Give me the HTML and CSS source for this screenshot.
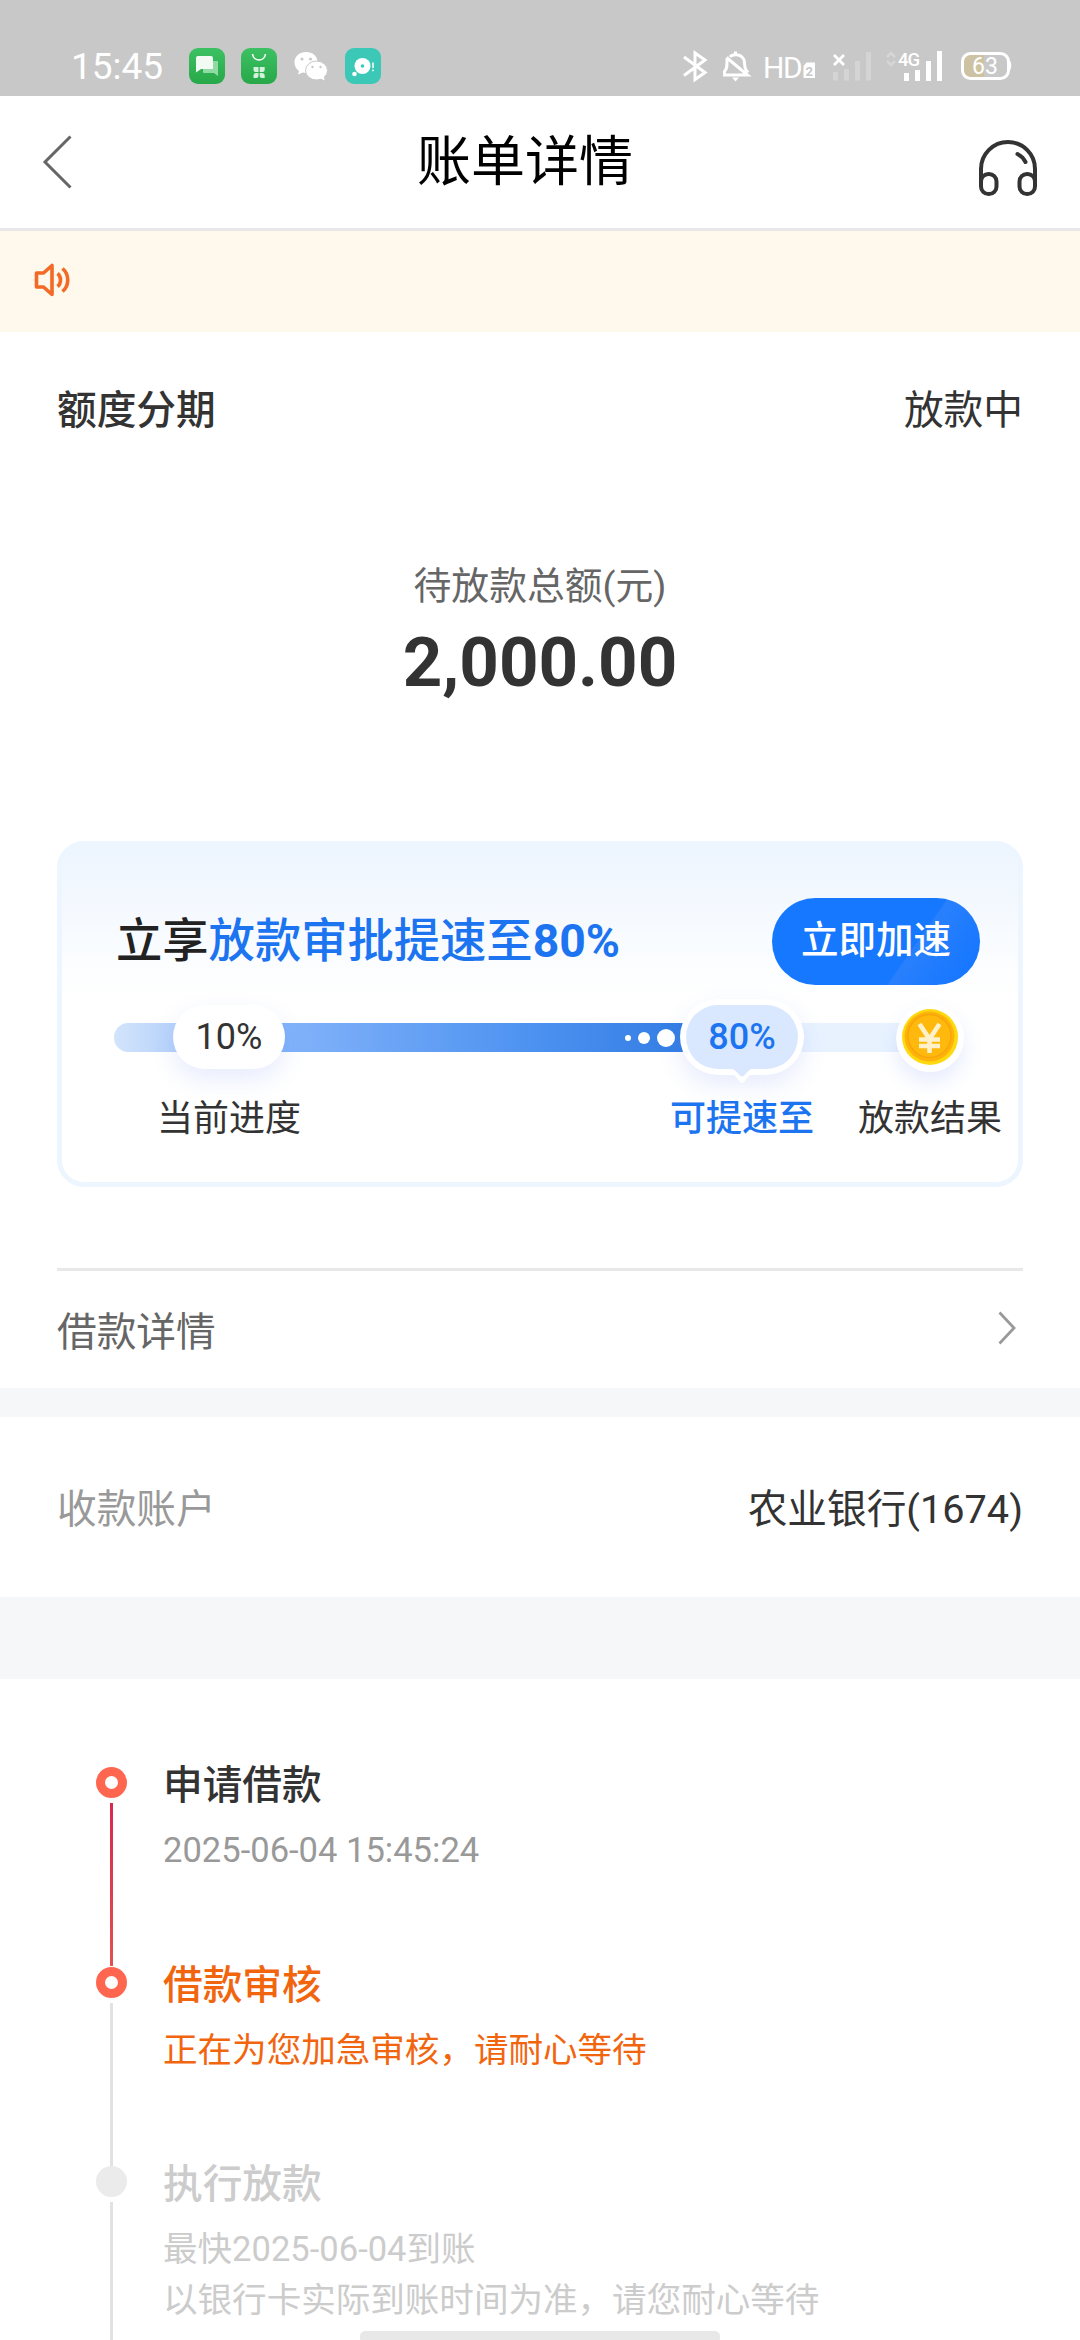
FILE: index.html
```html
<!DOCTYPE html>
<html lang="zh-CN">
<head>
<meta charset="utf-8">
<title>账单详情</title>
<link rel="stylesheet" href="styles.css">
</head>
<body>
<div class="screen">
  <div class="status">
    <span class="clock">15:45</span>
    <svg class="status-apps" width="210" height="36" viewBox="0 0 210 36">
      <defs>
        <linearGradient id="green" x1="0" y1="0" x2="0" y2="1"><stop offset="0" stop-color="#3cc162"/><stop offset="1" stop-color="#27a849"/></linearGradient>
      </defs>
      <g transform="translate(9 0)">
        <rect width="36" height="36" rx="9" fill="url(#green)"/>
        <path d="M14 13h14a1 1 0 0 1 1 1v14l-4-3H15a1 1 0 0 1-1-1z" fill="#8fdba3"/>
        <path d="M9 8h13a2 2 0 0 1 2 2v11H12l-5 3.500V10a2 2 0 0 1 2-2z" fill="#f1fbf3"/>
      </g>
      <g transform="translate(61 0)">
        <rect width="36" height="36" rx="9" fill="url(#green)"/>
        <path d="M11.500 6c1 8 12 8 13 0" fill="none" stroke="#fff" stroke-width="1.600"/>
        <path d="M12.500 19h5v5h-3a2 2 0 0 1-2-2zM18.700 19h5v3a2 2 0 0 1-2 2h-3zM12.500 30v-2a3 3 0 0 1 3-3h2v3a2 2 0 0 1-2 2zM18.700 25h2a3 3 0 0 1 3 3v2h-3a2 2 0 0 1-2-2z" fill="#d3f2db"/>
      </g>
      <g transform="translate(10 0)">
        <path d="M116 4c6.500 0 11.500 4 11.500 10S122 25 116 25l-3-.4-5 2 1-3.500c-3-2-4.500-5-4.500-9C104.500 8 110 4 116 4z" fill="#fff"/>
        <ellipse cx="126.500" cy="22.500" rx="11" ry="9.500" fill="#fff" stroke="#c8c8c8"/>
        <path d="M130 30l4.500 2.500-1-5.500z" fill="#fff"/>
        <g fill="#c8c8c8"><circle cx="112" cy="11" r="1.500"/><circle cx="120.500" cy="11" r="1.500"/><circle cx="122.500" cy="19" r="1.200"/><circle cx="130.500" cy="19" r="1.200"/></g>
      </g>
      <g transform="translate(165 0)">
        <rect width="36" height="36" rx="9" fill="#3cc8b6"/>
        <circle cx="17.500" cy="18" r="8" fill="#fff"/><circle cx="17.500" cy="18" r="1.800" fill="#3cc8b6"/><circle cx="9.500" cy="26" r="2.300" fill="#fff"/>
        <path d="M28 14.500v5.500M28 21.500v1.800" stroke="#fff" stroke-width="1.500"/>
      </g>
    </svg>
    <svg class="status-icons" width="340" height="36" viewBox="680 48 340 36">
      <g fill="none" stroke="#fff" stroke-width="3">
        <path d="M684 57l21 15.500-10 7V53l10 7-21 15.500"/>
        <path d="M730 57c2-3 11-4 14 3 1 3 0 7 2 10l2 2.500M726.500 57.500l21 17.500H724.500v-3.500c3-3 2.500-6 2.500-13.500M735.500 55v-3.500"/>
      </g>
      <path d="M732 77.500h7l-3.500 4z" fill="#fff"/>
      <path d="M803.500 66l3-3.500h8.500V78h-11.500z" fill="#fff"/>
      <text class="hd" x="763" y="78">HD</text>
      <text class="sim" x="805.500" y="76">2</text>
      <path d="M834 55l10 10M844 55l-10 10" stroke="#fff" stroke-width="2.800"/>
      <path d="M835.500 72v8.500M846.500 69v11.500M857.500 61v19.500M868.500 52v28.500" stroke="#d4d4d4" stroke-width="5" />
      <path d="M887 57l4-4 4 4M887 61l4 4 4-4" fill="none" stroke="#d6d6d6" stroke-width="2.500"/>
      <text class="net" x="898" y="66">4G</text>
      <path d="M906.500 73v8M917.500 70v11M928.500 61v20M939.500 51v30" stroke="#fff" stroke-width="5"/>
      <path d="M970 54h14v24h-14a6 6 0 0 1-6-6V60a6 6 0 0 1 6-6z" fill="#cdc3a2"/>
      <rect x="962.500" y="53.500" width="46" height="25" rx="8" fill="none" stroke="#fff" stroke-width="3"/>
      <path d="M1009 60c3 1 3 10 0 11z" fill="#fff"/>
      <text class="charge" x="985" y="74" text-anchor="middle">63</text>
    </svg>
  </div>

  <header class="navbar">
    <svg class="back" width="30" height="54" viewBox="0 0 30 54"><path d="M28.500 1.500L3 27l25.500 25.500" fill="none" stroke="#666" stroke-width="3"/></svg>
    <h1 class="title">账单详情</h1>
    <svg class="headset" width="60" height="58" viewBox="0 0 60 58" fill="none" stroke="#333" stroke-width="4">
      <path d="M3 47V30a27 27 0 0 1 54 0v17"/>
      <rect x="3" y="35" width="15.500" height="20" rx="7.500"/><rect x="41.500" y="35" width="15.500" height="20" rx="7.500"/>
      <path d="M39.500 15c4 2 6 4 8 8" stroke-linecap="round"/>
    </svg>
  </header>

  <div class="notice">
    <svg width="38" height="34" viewBox="0 0 38 34" fill="none" stroke="#f26a26" stroke-width="3.600">
      <path d="M2.500 10h7l8.500-7.500v29L9.500 24h-7z" stroke-linejoin="round"/>
      <path d="M23.500 10.500c4 3 4 10 0 13M28.500 5.500c7 6 7 17 0 23"/>
    </svg>
  </div>

  <section class="summary">
    <div class="row head"><span class="strong">额度分期</span><span>放款中</span></div>
    <div class="caption">待放款总额(元)</div>
    <div class="amount">2,000.00</div>

    <div class="card">
      <div class="card-top">
        <div class="card-title">立享<span class="blue">放款审批提速至<b>80%</b></span></div>
        <div class="button">立即加速</div>
      </div>
      <div class="track">
        <div class="fill"><i class="dot s"></i><i class="dot m"></i><i class="dot l"></i></div>
        <div class="pill now">10%</div>
        <div class="pill goal">80%<svg class="tip" width="36" height="18" viewBox="0 0 36 18"><path d="M4 5h28q-5 0-8 4l-4 5q-2 2-4 0l-4-5q-3-4-8-4z" fill="#fff"/><path d="M6 0h24l-1 .5q-3 .5-5 3l-4 4q-2 2-4 0l-4-4q-2-2.500-5-3z" fill="#d9e8fe"/></svg></div>
        <svg class="coin" width="68" height="68" viewBox="0 0 68 68">
          <circle cx="34" cy="34" r="34" fill="#fff"/>
          <circle cx="34" cy="33" r="28" fill="#ffd90f"/>
          <circle cx="33.500" cy="32.500" r="25" fill="#fdb30a"/>
          <circle cx="33.500" cy="32" r="21.500" fill="#ffb90d" stroke="#f7a50a" stroke-width="1.500"/>
          <path d="M23.500 20l10 15 10-15M33.500 35v14M23 35.500h21M23 42h21" fill="none" stroke="#fff1c9" stroke-width="4.600"/>
        </svg>
      </div>
      <div class="labels">
        <span class="label one">当前进度</span><span class="label two">可提速至</span><span class="label three">放款结果</span>
      </div>
    </div>

    <div class="row detail"><span>借款详情</span>
      <svg width="18" height="34" viewBox="0 0 18 34"><path d="M1.500 1.500L16 17 1.500 32.500" fill="none" stroke="#999" stroke-width="2.800"/></svg>
    </div>
  </section>

  <section class="row account"><span class="muted">收款账户</span><span>农业银行(1674)</span></section>

  <section class="timeline">
    <div class="step done">
      <div class="rail"><i class="node"></i><i class="line"></i></div>
      <div class="body"><div class="name">申请借款</div><div class="note">2025-06-04 15:45:24</div></div>
    </div>
    <div class="step active">
      <div class="rail"><i class="node"></i><i class="line"></i></div>
      <div class="body"><div class="name">借款审核</div><div class="note">正在为您加急审核，请耐心等待</div></div>
    </div>
    <div class="step pending">
      <div class="rail"><i class="node"></i><i class="line"></i></div>
      <div class="body"><div class="name">执行放款</div><div class="note">最快2025-06-04到账<br>以银行卡实际到账时间为准，请您耐心等待</div></div>
    </div>
  </section>
  <div class="home"></div>
</div>
</body>
</html>
```
FILE: styles.css
```css
* { box-sizing: border-box; }
body { margin: 0; background: #f6f7f9; }
.screen {
  position: relative; width: 1080px; height: 2340px; overflow: hidden;
  display: flex; flex-direction: column;
  font-family: Roboto, "Noto Sans CJK SC", sans-serif;
  font-size: 39.700px; color: #333;
}
.screen > * { flex-shrink: 0; }
svg { display: block; flex-shrink: 0; }

.status { height: 96px; background: #c8c8c8; display: flex; align-items: flex-start; padding: 48px 60px 0 71px; }
.clock { width: 109px; height: 36px; line-height: 38px; font-size: 37px; color: #fff; white-space: nowrap; }
.status-icons { margin-left: auto; }
.status-icons text { fill: #fff; font-family: Roboto, sans-serif; }
.status-icons .hd { font-size: 30px; letter-spacing: -1.500px; }
.status-icons .sim { font-size: 13px; font-weight: 700; fill: #c8c8c8; }
.status-icons .net { font-size: 18.500px; font-weight: 500; letter-spacing: -1px; }
.status-icons .charge { font-size: 23px; letter-spacing: 0; }

.navbar { height: 135px; background: #fff; border-bottom: 3px solid #e8e8e8; display: flex; justify-content: space-between; padding: 0 42px 0 42px; }
.back { margin-top: 39px; }
.title { margin: 0; font-size: 54px; line-height: 133px; font-weight: 400; color: #000; }
.headset { margin-top: 43px; }

.notice { height: 101px; background: #fff8ec; padding: 32px 34px; }

.summary { height: 1056px; background: #fff; padding: 0 57px; }
.row { display: flex; justify-content: space-between; align-items: center; }
.head { height: 155px; padding-bottom: 7px; }
.strong { font-weight: 500; }
.caption { margin-top: 72px; height: 54px; line-height: 54px; text-align: center; font-size: 37.800px; color: #666; }
.amount { margin-top: 10px; height: 80px; line-height: 80px; text-align: center; font-size: 69px; font-weight: 700; }

.card {
  margin-top: 138px; height: 346px; border: 5px solid #edf5ff; border-radius: 27px; padding: 52px 38px 0 54px;
  background: linear-gradient(#edf5ff, #fff 150px);
}
.card-top { height: 87px; display: flex; justify-content: space-between; align-items: center; }
.card-title { font-size: 46.300px; font-weight: 500; color: #222; line-height: 66px; padding-bottom: 2px; }
.blue { color: #1c74f0; }
.button {
  width: 208px; height: 87px; border-radius: 44px; color: #fff; font-size: 37.500px; font-weight: 500;
  line-height: 84px; text-align: center;
  background: linear-gradient(125deg, #1677ff 65%, #2980fd 66%, #1677ff 92%);
}
.track { position: relative; margin: 38px 10px 0 -2px; width: 816px; height: 29px; border-radius: 15px; background: #e8f2ff; }
.fill {
  width: 600px; height: 29px; border-radius: 15px 0 0 15px; background: linear-gradient(90deg, #d3e4fb, #83b3fa 28%, #4a90f0 72%, #2f79e0);
  display: flex; align-items: center; justify-content: flex-end; gap: 7px; padding-right: 39px;
}
.dot { background: #fff; border-radius: 50%; }
.s { width: 6px; height: 6px; }
.m { width: 12px; height: 12px; }
.l { width: 18px; height: 18px; }
.pill { position: absolute; top: -18px; width: 112px; height: 64px; border-radius: 32px; text-align: center; font-size: 36px; line-height: 64px; background: #fff; box-shadow: 0 10px 24px rgba(70, 110, 240, .13); }
.now { left: 59px; }
.goal { left: 572px; background: #d9e8fe; color: #1c74f0; font-weight: 500; box-shadow: 0 0 0 6px #fff, 0 10px 24px 6px rgba(70, 110, 240, .13); }
.tip { position: absolute; left: 38px; top: 63px; }
.coin { position: absolute; left: 782px; top: -19px; border-radius: 50%; box-shadow: 0 10px 20px rgba(70, 110, 240, .13); }
.labels { display: grid; grid-template-columns: 230px 1fr 144px; margin: 40px -22px 0 -2px; font-size: 36px; line-height: 54px; }
.one { text-align: center; }
.two { padding-left: 326px; font-weight: 500; color: #1c74f0; }

.detail { margin-top: 81px; height: 120px; border-top: 3px solid #e8e8e8; color: #666; padding: 0 7px 3px 0; }
.account { height: 180px; margin-top: 29px; background: #fff; padding: 0 57px 4px; }
.muted { color: #999; }

.timeline { margin-top: 82px; height: 662px; background: #fff; padding: 85px 95px 0; }
.step { display: flex; height: 199.500px; }
.rail { width: 33px; display: flex; flex-direction: column; align-items: center; }
.node { width: 31px; height: 31px; margin-top: 3px; flex-shrink: 0; border-radius: 50%; border: 9px solid #ff6650; background: #fff; }
.line { width: 3px; height: 163px; margin-top: 5px; flex-shrink: 0; background: #e2e2e2; }
.done .line { background: linear-gradient(#d9284f, #e05250); }
.body { padding-left: 35px; }
.name { font-weight: 500; line-height: 44px; height: 61px; }
.note { font-size: 34.560px; line-height: 51px; color: #999; white-space: nowrap; }
.active .name, .active .note { color: #f2650f; }
.pending .name, .pending .note { color: #ccc; }
.pending .node { border-color: #ebebeb; background: #ebebeb; }
.home { position: absolute; left: 360px; top: 2331px; width: 360px; height: 12px; border-radius: 5px; background: #e8e8e8; }
```
